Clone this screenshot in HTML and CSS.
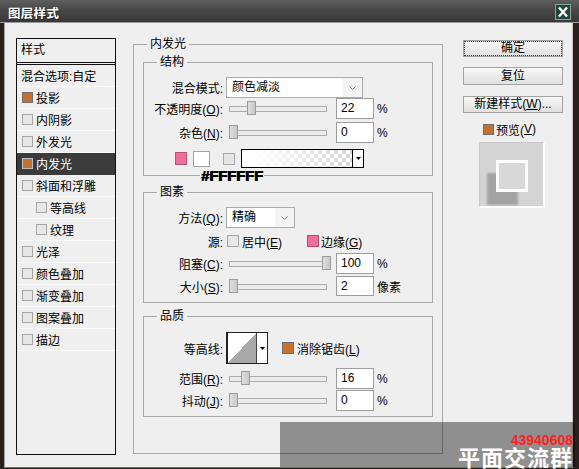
FILE: index.html
```html
<!DOCTYPE html>
<html>
<head>
<meta charset="utf-8">
<link rel="stylesheet" href="styles.css">
</head>
<body>
<div class="window">
  <div class="titlebar">
    <span class="title">图层样式</span>
    <svg class="close" width="16" height="16" viewBox="0 0 16 16">
      <rect x="0.5" y="0.5" width="15" height="15" fill="#23443c" stroke="#8aa49b"/>
      <path d="M4 3.5L12 12.5M12 3.5L4 12.5" stroke="#fff" stroke-width="2.3" fill="none"/>
    </svg>
  </div>
  <div class="dialog">
    <div class="list">
      <div class="lhead">样式</div>
      <div class="litem blend">混合选项:自定</div>
      <div class="litem"><i class="cb on"></i>投影</div>
      <div class="litem"><i class="cb"></i>内阴影</div>
      <div class="litem"><i class="cb"></i>外发光</div>
      <div class="litem sel"><i class="cb on light"></i>内发光</div>
      <div class="litem"><i class="cb"></i>斜面和浮雕</div>
      <div class="litem sub"><i class="cb"></i>等高线</div>
      <div class="litem sub"><i class="cb"></i>纹理</div>
      <div class="litem"><i class="cb"></i>光泽</div>
      <div class="litem"><i class="cb"></i>颜色叠加</div>
      <div class="litem"><i class="cb"></i>渐变叠加</div>
      <div class="litem"><i class="cb"></i>图案叠加</div>
      <div class="litem"><i class="cb"></i>描边</div>
    </div>

    <div class="group main">
      <div class="legend lg-main">内发光</div>

      <div class="group inner g-struct">
        <div class="legend">结构</div>
        <div class="frow r1">
          <span class="lbl">混合模式:</span>
          <div class="select w-mode"><span class="sv">颜色减淡</span><span class="chev"><svg width="7" height="4" viewBox="0 0 7 4"><path d="M0.5 0.5L3.5 3.5L6.5 0.5" stroke="#808080" fill="none"/></svg></span></div>
        </div>
        <div class="frow r2">
          <span class="lbl">不透明度(<u>O</u>):</span>
          <div class="slider"><i class="thumb" style="left:21px"></i></div>
          <span class="num">22</span><span class="unit">%</span>
        </div>
        <div class="frow r3">
          <span class="lbl">杂色(<u>N</u>):</span>
          <div class="slider"><i class="thumb" style="left:3px"></i></div>
          <span class="num">0</span><span class="unit">%</span>
        </div>
        <div class="frow colors">
          <i class="sw sw-pink"></i>
          <i class="sw sw-white"></i>
          <i class="sw sw-gray"></i>
          <div class="grad"><span class="gfill"></span><span class="garrow"><svg width="5" height="3" viewBox="0 0 5 3"><path d="M0 0H5L2.5 3Z" fill="#000"/></svg></span></div>
          <span class="hex">#FFFFFF</span>
        </div>
      </div>

      <div class="group inner g-elem">
        <div class="legend">图素</div>
        <div class="frow r1">
          <span class="lbl">方法(<u>Q</u>):</span>
          <div class="select w-method"><span class="sv">精确</span><span class="chev"><svg width="7" height="4" viewBox="0 0 7 4"><path d="M0.5 0.5L3.5 3.5L6.5 0.5" stroke="#808080" fill="none"/></svg></span></div>
        </div>
        <div class="frow r-src">
          <span class="lbl">源:</span>
          <i class="cb cb12 c-center"></i><span class="ctext">居中(<u>E</u>)</span>
          <i class="cb cb12 pk c-edge"></i><span class="ctext2">边缘(<u>G</u>)</span>
        </div>
        <div class="frow r-choke">
          <span class="lbl">阻塞(<u>C</u>):</span>
          <div class="slider"><i class="thumb" style="left:96px"></i></div>
          <span class="num">100</span><span class="unit">%</span>
        </div>
        <div class="frow r-size">
          <span class="lbl">大小(<u>S</u>):</span>
          <div class="slider"><i class="thumb" style="left:3px"></i></div>
          <span class="num">2</span><span class="unit">像素</span>
        </div>
      </div>

      <div class="group inner g-qual">
        <div class="legend">品质</div>
        <div class="frow r-contour">
          <span class="lbl">等高线:</span>
          <div class="contour"><span class="cfill"></span><span class="carrow"><svg width="5" height="3" viewBox="0 0 5 3"><path d="M0 0H5L2.5 3Z" fill="#000"/></svg></span></div>
          <i class="cb cb12 on c-aa"></i><span class="ctext">消除锯齿(<u>L</u>)</span>
        </div>
        <div class="frow r-range">
          <span class="lbl">范围(<u>R</u>):</span>
          <div class="slider"><i class="thumb" style="left:15px"></i></div>
          <span class="num">16</span><span class="unit">%</span>
        </div>
        <div class="frow r-jitter">
          <span class="lbl">抖动(<u>J</u>):</span>
          <div class="slider"><i class="thumb" style="left:3px"></i></div>
          <span class="num">0</span><span class="unit">%</span>
        </div>
      </div>
    </div>

    <div class="side">
      <div class="btn def">确定</div>
      <div class="btn b2">复位</div>
      <div class="btn b3">新建样式(<u>W</u>)...</div>
      <div class="pv"><i class="cb on"></i>预览(<u>V</u>)</div>
      <div class="preview">
        <div class="pshadow"></div>
        <div class="psq"></div>
      </div>
    </div>
  </div>

  <div class="wm">
    <span class="qq">43940608</span>
    <span class="wmt">平面交流群</span>
  </div>
</div>
</body>
</html>
```

FILE: styles.css
```css
* { box-sizing: border-box; }

body {
  margin: 0;
  background: #1b1714;
  font: 12px "Liberation Sans", "Noto Sans CJK SC", sans-serif;
  color: #000;
}

u { text-decoration: underline; text-underline-offset: 1px; }

.window {
  position: relative;
  width: 579px;
  height: 469px;
  background: #2b211b;
  overflow: hidden;
}

/* title bar */
.titlebar {
  height: 23px;
  display: flex;
  align-items: center;
  justify-content: space-between;
  padding: 0 8px;
  background: linear-gradient(#5f5f5f, #474747 45%, #393939);
  border-bottom: 1px solid #9a9a9a;
}
.title {
  margin-top: 2px;
  color: #fff;
  font: bold 12.5px "Noto Sans CJK SC", sans-serif;
  letter-spacing: 0.3px;
  text-shadow: 1px 1px 0 #1e1e1e;
}
.close { margin-top: 2px; display: block; }

/* dialog body */
.dialog {
  display: flex;
  align-items: flex-start;
  margin-left: 4px;
  width: 569px;
  height: 445px;
  background: #efefef;
  border-left: 1px solid #a3a3a3;
  border-right: 1px solid #c9c9c9;
  border-bottom: 1px solid #6f6f6f;
}

/* style list */
.list {
  margin: 15px 0 0 11px;
  width: 100px;
  height: 417px;
  border: 1px solid #111;
  flex: none;
}
.lhead {
  height: 26px;
  line-height: 23px;
  padding-left: 4px;
  border-bottom: 3px double #111;
}
.litem {
  height: 22px;
  display: flex;
  align-items: center;
  padding-left: 5px;
  border-bottom: 1px solid #fbfbfb;
}
.litem.blend { padding-left: 4px; }
.litem.sub { padding-left: 19px; }
.litem.sel { background: #3b3b3b; color: #fff; border-bottom-color: #3b3b3b; }

.cb {
  display: inline-block;
  flex: none;
  width: 11px;
  height: 11px;
  margin-right: 3px;
  border: 1px solid #a6a6a6;
  background: #e7e7e7;
}
.cb.on { background: #c4702f; border-color: #6e6e6e; }
.cb.on.light { border-color: #bdbdbd; }
.cb.pk { background: #f16d9a; border-color: #b74b73; }
.cb12 { width: 12px; height: 12px; }

/* groups */
.group {
  border: 1px solid #a8a8a8;
  flex: none;
}
.legend {
  width: max-content;
  height: 14px;
  line-height: 14px;
  margin: -8px 0 0 13px;
  padding: 0 3px;
  background: #efefef;
}
.main {
  margin: 21px 0 0 17px;
  width: 310px;
  height: 410px;
}
.inner { margin: 0 9px; }
.g-struct { margin-top: 11px; padding-bottom: 7px; }
.g-elem { margin-top: 16px; padding-bottom: 6px; }
.g-qual { margin-top: 13px; padding-bottom: 5px; }

.frow {
  position: relative;
  display: flex;
  align-items: center;
  height: 21px;
}
.lbl {
  width: 79px;
  flex: none;
  text-align: right;
  margin-right: 3px;
  white-space: nowrap;
}

.g-struct .r1 { margin-top: 8px; }
.g-struct .r2 { margin-top: 0; }
.g-struct .r3 { margin-top: 3px; }
.colors { margin-top: 6px; height: 19px; }

.g-elem .r1 { margin-top: 8px; }
.r-src { margin-top: 3px; height: 20px; }
.r-choke { margin-top: 2px; }
.r-size { margin-top: 2px; height: 20px; }

.r-contour { margin-top: 9px; height: 32px; }
.r-range { margin-top: 4px; }
.r-jitter { margin-top: 1px; }

/* select */
.select {
  display: flex;
  height: 21px;
  border: 1px solid #ababab;
  background: #fff;
}
.w-mode { width: 137px; }
.w-method { width: 69px; }
.sv { flex: 1; line-height: 19px; padding-left: 5px; }
.chev {
  width: 19px;
  display: flex;
  align-items: center;
  justify-content: center;
  background: #f4f4f4;
}

/* slider */
.slider {
  position: relative;
  width: 104px;
  height: 21px;
  flex: none;
}
.slider::before {
  content: "";
  position: absolute;
  left: 3px;
  right: 3px;
  top: 8px;
  height: 4px;
  border: 1px solid #ababab;
  background: #ececec;
}
.thumb {
  position: absolute;
  top: 3px;
  width: 9px;
  height: 14px;
  border: 1px solid #9c9c9c;
  background: linear-gradient(90deg, #dedede, #c9c9c9);
}

.num {
  width: 38px;
  height: 21px;
  margin-left: 6px;
  padding-left: 4px;
  line-height: 19px;
  border: 1px solid #9d9d9d;
  background: #fff;
  flex: none;
}
.r-size .num { height: 20px; line-height: 18px; }
.unit { margin-left: 3px; }

/* colors row */
.sw { display: block; flex: none; }
.sw-pink {
  margin-left: 31px;
  width: 12px;
  height: 13px;
  background: #f16d9a;
  border: 1px solid #b94f77;
}
.sw-white {
  margin-left: 6px;
  width: 17px;
  height: 16px;
  background: #fff;
  border: 1px solid #a3a3a3;
}
.sw-gray {
  margin-left: 13px;
  width: 12px;
  height: 12px;
  background: #e5e5e5;
  border: 1px solid #a9a9a9;
}
.grad {
  margin-left: 6px;
  width: 123px;
  height: 19px;
  display: flex;
  border: 1px solid #000;
  background: #fff;
}
.gfill {
  flex: 1;
  background:
    linear-gradient(90deg, #fff 8%, rgba(255,255,255,0) 100%),
    repeating-conic-gradient(#d6d6d6 0 25%, #fff 0 50%) 0 0 / 8px 8px;
}
.garrow {
  width: 11px;
  border-left: 1px solid #000;
  display: flex;
  align-items: center;
  justify-content: center;
}
.hex {
  position: absolute;
  left: 56px;
  top: 20px;
  padding: 0 1px;
  background: #efefef;
  font: bold 15px/14px "Liberation Sans", sans-serif;
  letter-spacing: -0.2px;
  color: #000;
  text-shadow: 0.6px 0 0 #000, 0 0.4px 0 #000;
}

/* source row */
.c-center { margin-left: 1px; }
.ctext { margin-left: 0; }
.c-edge { margin-left: 25px; }
.ctext2 { margin-left: -1px; }

/* contour */
.contour {
  width: 42px;
  height: 32px;
  display: flex;
  border: 1px solid #222;
  border-left-width: 2px;
  background: #fff;
  flex: none;
}
.cfill {
  flex: 1;
  background: linear-gradient(to top left, #a9a9a9 50%, #fff 50%);
}
.carrow {
  width: 11px;
  border-left: 1px solid #444;
  display: flex;
  align-items: center;
  justify-content: center;
}
.c-aa { margin-left: 14px; }

/* right column */
.side {
  margin: 17px 0 0 20px;
  width: 100px;
  flex: none;
}
.btn {
  height: 17px;
  display: flex;
  align-items: center;
  justify-content: center;
  border: 1px solid #a2a2a2;
  background: linear-gradient(#f8f8f8, #e0e0e0);
  line-height: 15px;
  white-space: nowrap;
}
.btn.def { outline: 1px dotted #333; outline-offset: -2px; }
.btn.b2 { margin-top: 10px; height: 18px; }
.btn.b3 { margin-top: 11px; }
.pv {
  margin-top: 10px;
  padding-left: 20px;
  height: 12px;
  display: flex;
  align-items: center;
}
.pv .cb { margin-right: 2px; }
.preview {
  position: relative;
  margin: 7px 0 0 16px;
  width: 66px;
  height: 66px;
  background: #d4d4d4;
  border-top: 1px solid #cacaca;
  border-left: 1px solid #cacaca;
  border-right: 2px solid #fff;
  border-bottom: 2px solid #fff;
}
.pshadow {
  position: absolute;
  left: 7px;
  top: 30px;
  width: 31px;
  height: 32px;
  background: #a3a3a3;
  filter: blur(1px);
}
.psq {
  position: absolute;
  left: 16px;
  top: 17px;
  width: 32px;
  height: 32px;
  border: 3px solid #fff;
  background: #d8d8d8;
}

/* watermark overlay */
.wm {
  position: absolute;
  left: 280px;
  top: 422px;
  width: 295px;
  height: 45px;
  background: rgba(0, 0, 0, 0.4);
  display: flex;
  flex-direction: column;
  align-items: flex-end;
  padding-right: 2px;
}
.qq {
  margin-top: 12px;
  height: 12px;
  color: #ff1f1f;
  font: bold 14px/12px "Liberation Sans", sans-serif;
}
.wmt {
  height: 20px;
  color: #fff;
  font: bold 22px/20px "Noto Sans CJK SC", sans-serif;
  letter-spacing: 1px;
}
```
